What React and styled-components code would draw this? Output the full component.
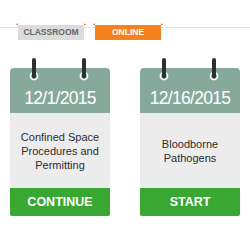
import React from "react";
import styled, { createGlobalStyle } from "styled-components";

const GlobalStyle = createGlobalStyle`
  body {
    margin: 0;
    background: #fff;
    font-family: "Liberation Sans", Arial, sans-serif;
  }
`;

const Page = styled.div`
  width: 250px;
  height: 238px;
  overflow: hidden;
`;

const TabBar = styled.div`
  display: flex;
  gap: 11px;
  padding: 25px 0 0 18px;
  background-image: linear-gradient(#e4e4e4, #e4e4e4);
  background-repeat: no-repeat;
  background-size: 100% 1px;
  background-position: 0 27px;
`;

const Tab = styled.div`
  position: relative;
  width: 66px;
  height: 15px;
  line-height: 15px;
  text-align: center;
  font-size: 8.5px;
  font-weight: bold;
  text-transform: uppercase;
  background: ${(p) => (p.$active ? "#f5821f" : "#dcdcdc")};
  color: ${(p) => (p.$active ? "#fff" : "#666")};

  &::before,
  &::after {
    content: "";
    position: absolute;
    top: -2px;
    width: 0;
    height: 0;
    border-bottom: 2px solid #d06a12;
  }
  &::before {
    left: -2px;
    border-left: 2px solid transparent;
  }
  &::after {
    right: -2px;
    border-right: 2px solid transparent;
  }
`;

const CardRow = styled.div`
  display: flex;
  gap: 30px;
  padding: 18px 0 0 10px;
`;

const Card = styled.div`
  width: 100px;
  padding-top: 10px;
`;

const Header = styled.div`
  position: relative;
  height: 45px;
  box-sizing: border-box;
  padding-top: 22px;
  background: #87a99b;
  border-radius: 4px 4px 0 0;
  color: #fff;
  font-size: 17.5px;
  line-height: 17px;
  letter-spacing: -0.7px;
  text-align: center;
`;

const Ring = styled.svg`
  position: absolute;
  top: -10px;
  left: ${(p) => p.$left}px;
`;

const Body = styled.div`
  height: 75px;
  display: flex;
  align-items: center;
  justify-content: center;
  padding: 0 6px;
  background: #ececec;
  color: #2e2e2e;
  font-size: 11px;
  line-height: 14px;
  text-align: center;
`;

const Action = styled.div`
  height: 28px;
  line-height: 28px;
  background: #38a832;
  color: #fff;
  font-size: 12.5px;
  font-weight: bold;
  text-align: center;
  border-radius: 0 0 2px 2px;
`;

function Peg({ left }) {
  return (
    <Ring $left={left} width="10" height="24" viewBox="0 0 10 24">
      <circle cx="5" cy="18" r="3.6" fill="none" stroke="#fff" strokeWidth="1.6" />
      <line x1="5" y1="2" x2="5" y2="18.5" stroke="#2f2f2f" strokeWidth="4" strokeLinecap="round" />
    </Ring>
  );
}

const courses = [
  { date: "12/1/2015", title: "Confined Space Procedures and Permitting", action: "CONTINUE" },
  { date: "12/16/2015", title: "Bloodborne Pathogens", action: "START" },
];

export default function App() {
  return (
    <Page>
      <GlobalStyle />
      <TabBar>
        <Tab>Classroom</Tab>
        <Tab $active>Online</Tab>
      </TabBar>
      <CardRow>
        {courses.map((c) => (
          <Card key={c.date}>
            <Header>
              <Peg left={19} />
              <Peg left={69} />
              {c.date}
            </Header>
            <Body>{c.title}</Body>
            <Action>{c.action}</Action>
          </Card>
        ))}
      </CardRow>
    </Page>
  );
}
